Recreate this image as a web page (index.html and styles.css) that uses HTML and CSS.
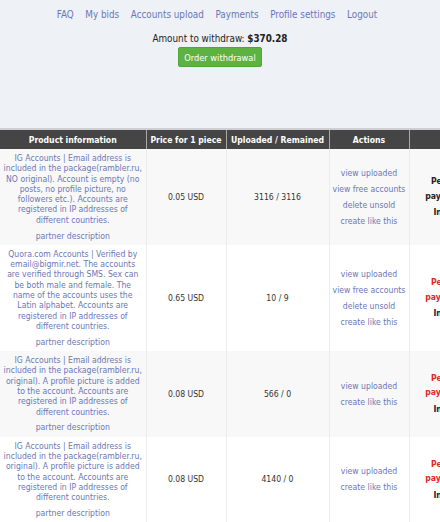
FILE: index.html
```html
<!DOCTYPE html>
<html lang="en">
<head>
<meta charset="utf-8">
<title>Seller panel</title>
<link rel="stylesheet" href="styles.css">
</head>
<body>
<nav class="topnav">
  <a href="#">FAQ</a>
  <a href="#">My bids</a>
  <a href="#">Accounts upload</a>
  <a href="#">Payments</a>
  <a href="#">Profile settings</a>
  <a href="#">Logout</a>
</nav>
<section class="balance">
  <div class="amount">Amount to withdraw: <b>$370.28</b></div>
  <button class="btn-withdraw" type="button">Order withdrawal</button>
</section>
<div class="table-wrap">
<table class="offers">
  <colgroup>
    <col class="c-info"><col class="c-price"><col class="c-count"><col class="c-actions"><col class="c-status">
  </colgroup>
  <thead>
    <tr>
      <th>Product information</th>
      <th>Price for 1 piece</th>
      <th>Uploaded / Remained</th>
      <th>Actions</th>
      <th>Status</th>
    </tr>
  </thead>
  <tbody>
    <tr class="shaded">
      <td class="info">
        <a class="desc" href="#">IG Accounts | Email address is included in the package(rambler.ru, NO original). Account is empty (no posts, no profile picture, no followers etc.). Accounts are registered in IP addresses of different countries.</a>
        <a class="partner" href="#">partner description</a>
      </td>
      <td>0.05 USD</td>
      <td>3116 / 3116</td>
      <td class="actions">
        <a href="#">view uploaded</a>
        <a href="#">view free accounts</a>
        <a href="#">delete unsold</a>
        <a href="#">create like this</a>
      </td>
      <td class="status">
        <span class="st-main">Pending approval</span>
        <span class="st-main">payment is required</span>
        <span class="st-sub">Inactive product</span>
      </td>
    </tr>
    <tr>
      <td class="info">
        <a class="desc" href="#">Quora.com Accounts | Verified by email@bigmir.net. The accounts are verified through SMS. Sex can be both male and female. The name of the accounts uses the Latin alphabet. Accounts are registered in IP addresses of different countries.</a>
        <a class="partner" href="#">partner description</a>
      </td>
      <td>0.65 USD</td>
      <td>10 / 9</td>
      <td class="actions">
        <a href="#">view uploaded</a>
        <a href="#">view free accounts</a>
        <a href="#">delete unsold</a>
        <a href="#">create like this</a>
      </td>
      <td class="status">
        <span class="st-main alert">Pending approval</span>
        <span class="st-main alert">payment is required</span>
        <span class="st-sub">Inactive product</span>
      </td>
    </tr>
    <tr class="shaded">
      <td class="info">
        <a class="desc" href="#">IG Accounts | Email address is included in the package(rambler.ru, original). A profile picture is added to the account. Accounts are registered in IP addresses of different countries.</a>
        <a class="partner" href="#">partner description</a>
      </td>
      <td>0.08 USD</td>
      <td>566 / 0</td>
      <td class="actions">
        <a href="#">view uploaded</a>
        <a href="#">create like this</a>
      </td>
      <td class="status">
        <span class="st-main alert">Pending approval</span>
        <span class="st-main alert">payment is required</span>
        <span class="st-sub">Inactive product</span>
      </td>
    </tr>
    <tr>
      <td class="info">
        <a class="desc" href="#">IG Accounts | Email address is included in the package(rambler.ru, original). A profile picture is added to the account. Accounts are registered in IP addresses of different countries.</a>
        <a class="partner" href="#">partner description</a>
      </td>
      <td>0.08 USD</td>
      <td>4140 / 0</td>
      <td class="actions">
        <a href="#">view uploaded</a>
        <a href="#">create like this</a>
      </td>
      <td class="status">
        <span class="st-main alert">Pending approval</span>
        <span class="st-main alert">payment is required</span>
        <span class="st-sub">Inactive product</span>
      </td>
    </tr>
  </tbody>
</table>
</div>
</body>
</html>
```
FILE: styles.css
```css
html, body {
  margin: 0;
  padding: 0;
}

body {
  background: #eef1f5;
  color: #222;
  font-family: "DejaVu Sans Condensed", "DejaVu Sans", sans-serif;
  overflow-x: hidden;
}

a {
  color: #6b77b5;
  text-decoration: none;
}

.topnav {
  display: flex;
  justify-content: center;
  gap: 11.6px;
  padding: 9px 6px 0 0;
  font-size: 9.8px;
  line-height: 12px;
}

.balance {
  display: flex;
  flex-direction: column;
  align-items: center;
  margin-top: 12px;
}

.amount {
  font-size: 9.8px;
  line-height: 12px;
  color: #222;
}

.btn-withdraw {
  margin-top: 2px;
  height: 20px;
  padding: 0 5px;
  background: #5db242;
  border: 1px solid #52a53a;
  border-radius: 2px;
  color: #fff;
  font-family: inherit;
  font-size: 9.2px;
}

.table-wrap {
  margin-top: 61px;
  overflow: hidden;
}

.offers {
  border-collapse: collapse;
  table-layout: fixed;
  width: 529px;
  font-size: 8.6px;
  border-top: 2px solid #cdcfd2;
}

.c-info { width: 146px; }
.c-price { width: 80px; }
.c-count { width: 103px; }
.c-actions { width: 80px; }
.c-status { width: 120px; }

.offers th {
  background: #454545;
  color: #fff;
  font-weight: bold;
  height: 19px;
  padding: 0;
  text-align: center;
  border-left: 1px solid #a9a9a9;
}

.offers th:first-child {
  border-left: none;
}

.offers td {
  background: #fff;
  color: #333;
  text-align: center;
  vertical-align: middle;
  padding: 4px 3px;
  border-left: 1px solid #ececec;
  line-height: 10.3px;
}

.offers td:first-child {
  border-left: none;
}

.offers tr.shaded td {
  background: #f8f8f8;
}

.info a {
  display: block;
}

.info .partner {
  margin-top: 5.5px;
}

.actions a {
  display: block;
  line-height: 16px;
}

.status {
  padding-top: 18px;
}

.status .st-main {
  display: block;
  font-weight: bold;
  color: #222;
  line-height: 14.3px;
}

.status .st-main.alert {
  color: #e3262b;
}

.status .st-sub {
  display: block;
  margin-top: 2.4px;
  font-weight: bold;
  color: #222;
  line-height: 14.3px;
}
```
